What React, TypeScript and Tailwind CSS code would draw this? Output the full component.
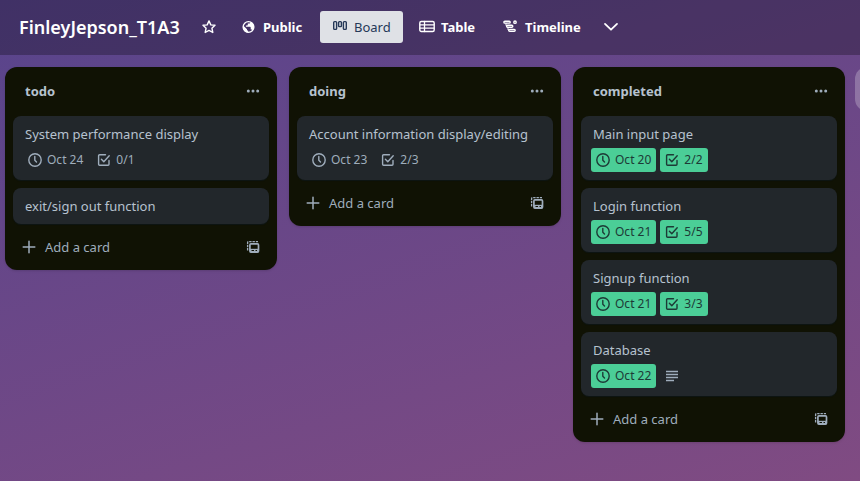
import type { ReactNode } from 'react';

type CardData = {
  title: string;
  due?: string;
  checklist?: string;
  description?: boolean;
  done?: boolean;
};

type ListData = { name: string; cards: CardData[] };

const lists: ListData[] = [
  {
    name: 'todo',
    cards: [
      { title: 'System performance display', due: 'Oct 24', checklist: '0/1' },
      { title: 'exit/sign out function' },
    ],
  },
  {
    name: 'doing',
    cards: [{ title: 'Account information display/editing', due: 'Oct 23', checklist: '2/3' }],
  },
  {
    name: 'completed',
    cards: [
      { title: 'Main input page', due: 'Oct 20', checklist: '2/2', done: true },
      { title: 'Login function', due: 'Oct 21', checklist: '5/5', done: true },
      { title: 'Signup function', due: 'Oct 21', checklist: '3/3', done: true },
      { title: 'Database', due: 'Oct 22', description: true, done: true },
    ],
  },
];

function Icon({ children }: { children: ReactNode }) {
  return (
    <svg
      viewBox="0 0 16 16"
      className="size-4 shrink-0"
      fill="none"
      stroke="currentColor"
      strokeWidth="1.4"
      strokeLinecap="round"
      strokeLinejoin="round"
      aria-hidden="true"
    >
      {children}
    </svg>
  );
}

const StarIcon = () => (
  <Icon>
    <path strokeWidth="1.4" d="M8 1.9 9.8 5.9 14 6.3 10.9 9.2 11.8 13.5 8 11.4 4.2 13.5 5.1 9.2 2 6.3 6.2 5.9Z" />
  </Icon>
);

const GlobeIcon = () => (
  <Icon>
    <circle cx="7.5" cy="8" r="5.4" strokeWidth="1.3" />
    <path
      fill="currentColor"
      stroke="none"
      d="M2.2 6.6 6 10.2v.8l1.2 1.1v1.6C4.300 13.500 2 11.200 2 8ZM9.400 2.700v.5c0 .7-.6 1.300-1.300 1.300H6.800v1.200c0 .4-.3.7-.7.7H4.900v1.400h4.100c.4 0 .7.3.7.7v2h.7c.6 0 1.100.4 1.300.9A5.700 5.700 0 0 0 9.400 2.700Z"
    />
  </Icon>
);

const BoardIcon = () => (
  <Icon>
    <rect x="1.700" y="2.600" width="2.900" height="7.800" rx="0.800" />
    <rect x="6.600" y="2.600" width="2.800" height="5" rx="0.800" />
    <rect x="11.400" y="2.600" width="2.900" height="7.800" rx="0.800" />
  </Icon>
);

const TableIcon = () => (
  <Icon>
    <rect x="0.800" y="2.500" width="14.400" height="10" rx="1.500" />
    <path d="M5.500 2.500v10M1 5.800h14M1 9.200h14" strokeWidth="1.300" />
  </Icon>
);

const TimelineIcon = () => (
  <Icon>
    <rect x="0.900" y="2.200" width="6.300" height="1.900" rx="0.950" strokeWidth="1.400" />
    <circle cx="12" cy="3.200" r="1.200" strokeWidth="1.400" />
    <rect x="3.600" y="6.300" width="6.200" height="1.900" rx="0.950" strokeWidth="1.400" />
    <rect x="5.700" y="10.400" width="6.500" height="1.900" rx="0.950" strokeWidth="1.400" />
    <path d="M3 4.400v2.300h.8M5 8.500v2.400h.8" strokeWidth="1" />
  </Icon>
);

const ChevronIcon = () => (
  <Icon>
    <path d="m2 4.900 6 5.800 6-5.800" strokeWidth="1.800" />
  </Icon>
);

const MoreIcon = () => (
  <Icon>
    <g fill="currentColor" stroke="none">
      <circle cx="3.300" cy="8" r="1.500" />
      <circle cx="8" cy="8" r="1.500" />
      <circle cx="12.700" cy="8" r="1.500" />
    </g>
  </Icon>
);

const ClockIcon = () => (
  <Icon>
    <circle cx="8" cy="8" r="6.200" />
    <path d="M7.800 4.500v3.700l1.700 1.700" />
  </Icon>
);

const CheckIcon = () => (
  <Icon>
    <path d="M9.500 2.800H3.600a1 1 0 0 0-1 1v8.400a1 1 0 0 0 1 1H12a1 1 0 0 0 1-1V8.500" />
    <path d="m5.400 7.300 2.400 2.500 5.400-6" />
  </Icon>
);

const DescriptionIcon = () => (
  <Icon>
    <path d="M2 3.500h12M2 6.500h12M2 9.500h12M2 12.500h8" strokeWidth="1.500" strokeLinecap="butt" />
  </Icon>
);

const PlusIcon = () => (
  <Icon>
    <path d="M8 2.200v11.600M2.200 8h11.600" strokeWidth="1.500" />
  </Icon>
);

const TemplateIcon = () => (
  <Icon>
    <path
      d="M2.600 11.500V3.600a1 1 0 0 1 1-1h9.400"
      strokeWidth="1.300"
      strokeDasharray="2.400 0.900"
      strokeLinecap="butt"
    />
    <rect x="4.900" y="4.900" width="8.600" height="8.200" rx="1" strokeWidth="1.700" />
    <path d="M5 9.800h8.400v3.300H5Z" fill="currentColor" stroke="none" />
    <path d="M6.500 11.500h2.500M10.500 11.500h1.500" stroke="#101204" strokeWidth="1" strokeLinecap="butt" />
  </Icon>
);

function ViewButton({ icon, label, active, width }: { icon: ReactNode; label: string; active?: boolean; width: string }) {
  return (
    <button
      type="button"
      aria-pressed={active}
      className={`flex h-8 shrink-0 items-center gap-1.5 rounded-[3px] pl-3 text-[13px] leading-5 ${width} ${
        active ? 'bg-[#dfe1e6] text-[#253858]' : 'font-bold text-white'
      }`}
    >
      {icon}
      {label}
    </button>
  );
}

function Badge({ icon, label, done }: { icon: ReactNode; label?: string; done?: boolean }) {
  return (
    <span
      className={`flex h-6 items-center gap-1 rounded-[3px] pr-[5px] pl-1 text-xs leading-4 ${
        done ? 'bg-[#4bce97] text-[#1d3a36]' : 'text-[#9fadbc]'
      }`}
    >
      {icon}
      {label}
    </span>
  );
}

function Card({ card }: { card: CardData }) {
  const hasBadges = card.due || card.checklist || card.description;
  return (
    <li className="rounded-lg bg-[#22272b] px-3 py-2 shadow-[0_1px_1px_#091e4240]">
      <h3 className="text-[13px] leading-5 whitespace-nowrap text-[#b6c2cf]">{card.title}</h3>
      {hasBadges && (
        <div className="-ml-0.5 flex gap-1 pt-1">
          {card.due && <Badge icon={<ClockIcon />} label={card.due} done={card.done} />}
          {card.checklist && <Badge icon={<CheckIcon />} label={card.checklist} done={card.done} />}
          {card.description && <Badge icon={<DescriptionIcon />} />}
        </div>
      )}
    </li>
  );
}

function List({ list }: { list: ListData }) {
  return (
    <section className="w-[272px] shrink-0 rounded-xl bg-[#101204] px-2 pb-2 text-[#9fadbc] shadow-sm">
      <header className="flex h-[49px] items-center justify-between pr-2 pb-px pl-3">
        <h2 className="text-[13px] leading-5 font-bold text-[#b6c2cf]">{list.name}</h2>
        <button type="button" aria-label={`${list.name} list actions`}>
          <MoreIcon />
        </button>
      </header>
      <ul className="flex flex-col gap-2">
        {list.cards.map((card) => (
          <Card key={card.title} card={card} />
        ))}
      </ul>
      <footer className="flex items-center justify-between pt-2 pr-2 pl-2">
        <button type="button" className="flex h-[30px] items-center gap-2 text-[13px] leading-5">
          <PlusIcon />
          Add a card
        </button>
        <button type="button" aria-label="Create from template">
          <TemplateIcon />
        </button>
      </footer>
    </section>
  );
}

export default function App() {
  return (
    <div className="flex min-h-screen flex-col overflow-hidden bg-linear-[163deg,#58448c,#804b82] font-['Noto_Sans','Open_Sans',sans-serif]">
      <header className="flex h-[55px] items-center gap-1 bg-black/27 pb-px pl-[19px] text-white">
        <h1 className="w-[170px] shrink-0 text-lg leading-6 font-semibold whitespace-nowrap">FinleyJepson_T1A3</h1>
        <button type="button" aria-label="Star board" className="flex size-8 shrink-0 items-center justify-center">
          <StarIcon />
        </button>
        <ViewButton icon={<GlobeIcon />} label="Public" width="w-[87px]" />
        <ViewButton icon={<BoardIcon />} label="Board" width="w-[83px]" active />
        <ViewButton icon={<TableIcon />} label="Table" width="w-[80px]" />
        <ViewButton icon={<TimelineIcon />} label="Timeline" width="w-[100px]" />
        <button type="button" aria-label="More views" className="flex size-8 shrink-0 items-center justify-center">
          <ChevronIcon />
        </button>
      </header>
      <main className="flex flex-1 items-start gap-3 overflow-hidden pt-3 pl-[5px]">
        {lists.map((list) => (
          <List key={list.name} list={list} />
        ))}
        <button
          type="button"
          aria-label="Add another list"
          className="-ml-0.5 h-11 w-[272px] shrink-0 rounded-xl bg-white/24"
        />
      </main>
    </div>
  );
}
